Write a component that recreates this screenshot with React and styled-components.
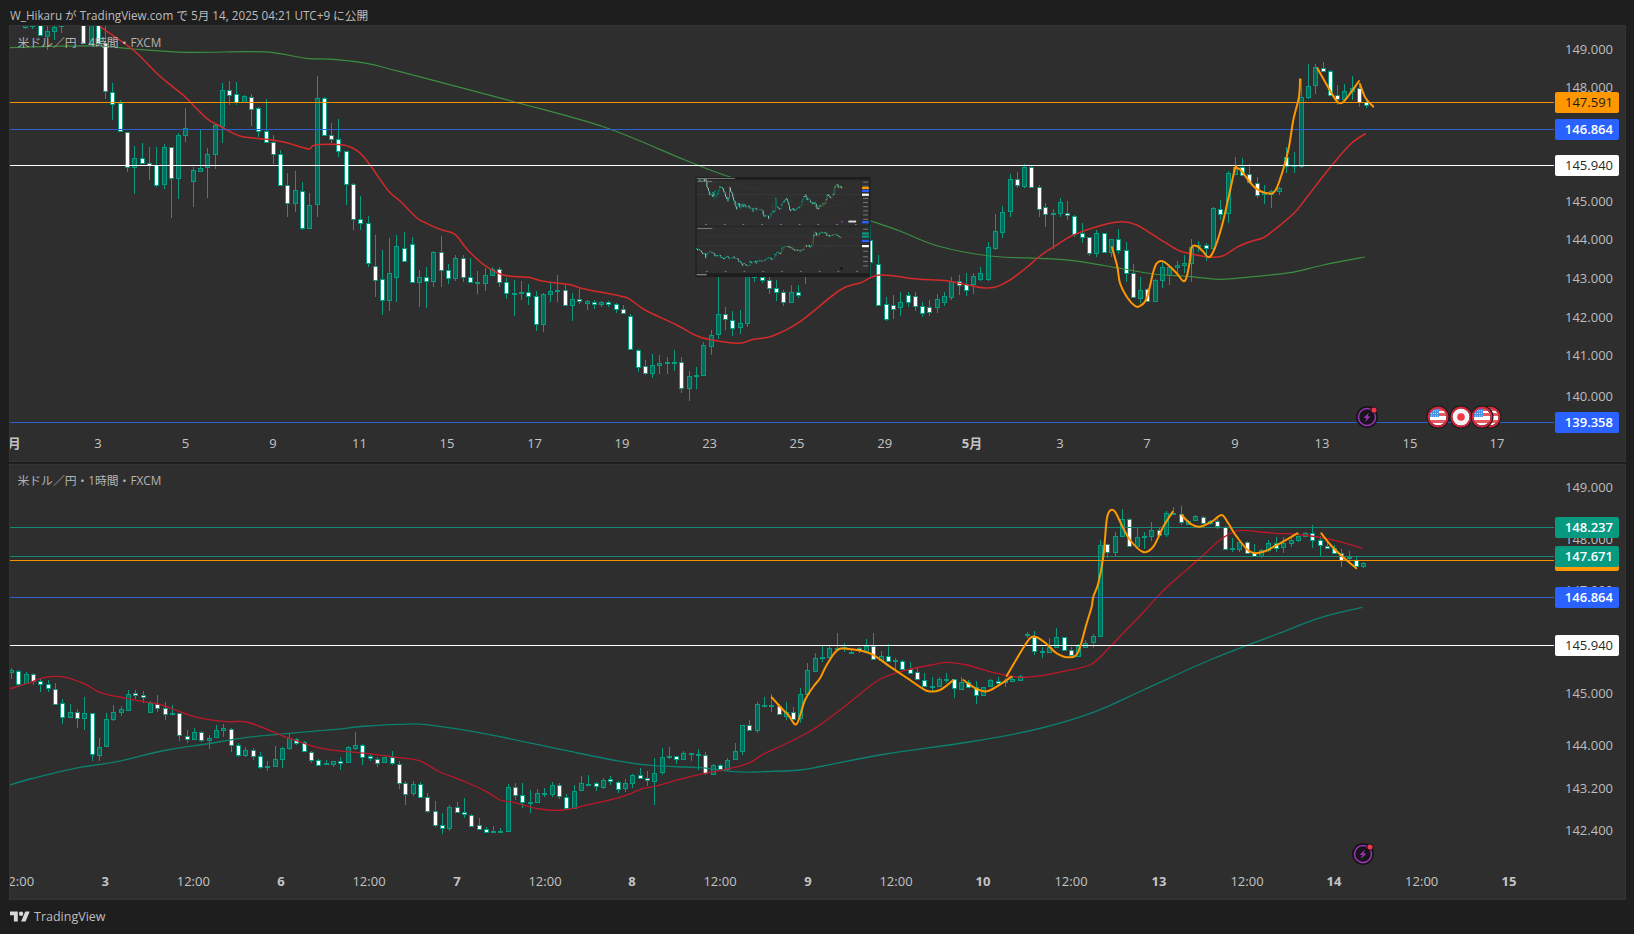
import React from 'react';
import styled, { createGlobalStyle } from 'styled-components';

const FONT = `"Open Sans", "Noto Sans CJK JP", sans-serif`;
const UP_EDGE = '#089981';
const UP_FILL = '#006b58';

const seg = (x0, dx, oy, s, items) =>
  items.map(([t, b, h, l, w], i) => ({ x: x0 + dx * i, t: oy + t / s, b: oy + b / s, h: oy + h / s, l: oy + l / s, w }));
const zp = (ox, oy, pts, s = 3) => pts.map(([x, y]) => [ox + x / s, oy + y / s]);

const smooth = (pts) => {
  let d = `M${pts[0][0].toFixed(1)} ${pts[0][1].toFixed(1)}`;
  for (let i = 0; i < pts.length - 1; i++) {
    const p0 = pts[Math.max(i - 1, 0)];
    const p1 = pts[i];
    const p2 = pts[i + 1];
    const p3 = pts[Math.min(i + 2, pts.length - 1)];
    const c1 = [p1[0] + (p2[0] - p0[0]) / 6, p1[1] + (p2[1] - p0[1]) / 6];
    const c2 = [p2[0] - (p3[0] - p1[0]) / 6, p2[1] - (p3[1] - p1[1]) / 6];
    d += `C${c1[0].toFixed(1)} ${c1[1].toFixed(1)} ${c2[0].toFixed(1)} ${c2[1].toFixed(1)} ${p2[0].toFixed(1)} ${p2[1].toFixed(1)}`;
  }
  return d;
};

/* ---------- upper pane candles: [bodyTop, bodyBottom, high, low, white?] ---------- */
const candlesTop = [
  ...seg(25, 7.29, 0, 3, [
    [70,82,60,86,0],[70,80,60,88,0],[70,107,60,107,1],[92,107,60,150,0],[80,92,60,120,0],[70,80,60,100,0],
    [50,60,40,70,0],[50,72,40,76,1],[60,130,60,130,1],[60,130,60,130,0],[60,130,60,130,1],
    [130,273,60,297,1],[275,310,250,360,1],[310,394,300,394,1],[395,501,395,515,1],[473,501,437,582,0],
    [473,487,430,490,1],[488,494,442,540,1],[494,553,440,560,1],[442,553,432,567,0],[442,535,440,653,1],
    [406,535,398,596,0],[385,406,324,425,0],[511,544,500,622,0],[503,511,390,510,0],[463,501,445,595,0],
    [376,463,370,506,0],[269,376,250,430,0],[269,283,244,315,1],[283,306,246,315,1],[289,307,286,310,0],
    [290,325,282,378,1],[325,394,320,412,1],[394,427,297,430,1],[427,463,404,492,1],[463,556,450,556,1],
    [556,610,520,650,1],[571,610,514,635,0],[572,682,546,690,1],[614,682,580,685,0],[295,613,228,650,0],
    [295,406,291,406,1],[406,418,370,428,1],[418,454,357,470,1],[454,553,452,616,1],[553,658,550,690,1],
    [658,670,588,690,1],[670,790,648,800,1],
  ]),
  ...seg(374.6, 7.29, 0, 0.9597, [
    [255,268,226,285,1],[268,288,240,302,1],[262,288,228,298,0],[236,266,226,290,0],
  ]),
  ...seg(404.33, 7.29, 170, 3, [
    [235,275,186,275,1],[223,338,202,338,1],[322,338,300,410,0],[322,334,292,413,1],[247,334,243,350,0],
    [247,302,198,350,1],[301,326,282,342,1],[265,326,255,332,0],[265,322,255,335,1],[322,338,265,340,1],
    [337,340,304,372,0],[316,340,294,362,0],[298,317,292,318,0],[298,338,292,350,1],[337,370,324,386,1],
    [370,371,331,437,0],[367,368,334,390,0],[367,379,342,405,1],[379,464,362,483,1],[373,464,370,486,0],
    [364,374,338,396,0],[360,361,315,395,0],[361,407,344,407,1],[388,407,370,452,0],[388,395,356,402,1],
    [393,398,390,420,0],[397,403,390,417,1],[397,404,392,411,0],[397,403,394,411,1],[403,418,398,428,1],
    [418,430,405,432,1],[439,539,432,540,1],[539,589,538,605,1],[589,611,570,614,1],[586,611,553,623,0],
    [580,586,556,612,0],[577,580,560,612,0],[577,578,541,603,0],[577,655,562,669,1],[619,655,604,692,0],
    [616,617,590,656,0],[526,616,516,616,0],[494,526,480,555,0],[433,494,200,506,0],[433,449,412,480,1],
    [449,472,423,497,1],[460,472,420,491,0],[100,460,60,470,0],[100,322,60,335,0],[322,331,100,340,1],
    [331,356,320,372,1],[355,368,330,392,1],[367,398,360,408,1],[367,398,344,400,0],[367,376,345,385,1],
  ]),
  ...seg(804.6, 7.29, 0, 1, [
    [255,270,240,284,0],[245,255,235,275,0],[235,245,225,250,0],[225,235,215,245,1],[215,228,205,235,0],
    [205,218,195,225,0],[198,208,190,215,1],[205,222,190,230,1],[225,240,210,250,1],[240,262,225,277,1],
  ]),
  ...seg(878.4, 7.29, 0, 0.9597, [
    [253,292,245,292,1],[292,306,285,308,1],[293,297,283,306,1],[290,295,280,303,0],[283,290,280,295,1],
    [284,294,280,298,1],[294,301,290,304,1],[295,300,288,303,1],[287,295,282,300,0],[284,290,280,294,0],
    [270,285,266,288,0],[270,274,264,283,1],[273,279,262,284,1],[265,273,262,282,0],[262,268,256,270,0],
    [237,268,232,270,0],[222,238,205,240,0],[203,222,198,228,0],[172,203,167,208,0],[172,178,165,180,1],
    [160,178,157,180,0],[160,179,158,180,1],[179,200,178,208,1],
  ]),
  ...seg(1045.33, 7.29, 160, 3, [
    [142,164,130,200,1],[160,163,148,268,0],[127,160,113,170,0],[160,167,123,180,1],[167,220,165,232,1],
    [220,233,190,250,1],[232,281,232,288,1],[220,281,210,291,0],[220,278,218,278,1],[238,278,238,290,0],
    [238,272,208,282,1],[271,340,246,366,1],[340,412,313,412,1],[389,412,352,430,0],[388,424,385,426,1],
    [361,424,358,425,0],[321,361,307,384,0],[320,345,318,375,0],[314,320,302,347,0],[308,314,286,340,0],
    [260,308,238,365,0],[256,260,243,275,0],[256,265,250,302,1],[145,265,140,275,0],[146,160,120,180,1],
    [40,160,34,188,0],[20,40,-10,46,0],[20,43,-5,45,1],[43,67,12,72,1],[68,103,52,113,1],[96,103,75,133,0],
    [92,102,90,143,0],[83,92,80,104,0],
  ]),
  ...seg(1286.33, 7.27, 0, 3, [
    [470,497,440,520,1],[494,497,457,518,0],[290,497,238,503,0],[257,290,192,296,0],[202,257,192,283,0],
    [203,211,186,211,1],[212,284,210,285,1],[284,295,255,315,1],[272,296,253,300,0],[263,272,228,300,0],
    [263,304,250,320,1],[305,314,300,323,1],
  ]),
];

/* ---------- lower pane candles ---------- */
const candlesBottom = [
  ...seg(11, 7.32, 640, 3, [
    [90,96,84,116,0],[92,131,90,140,1],[103,131,96,132,0],[103,124,100,135,1],[124,133,117,155,1],[133,146,120,155,1],
    [146,190,128,190,1],[190,232,177,251,1],[217,232,192,232,0],[217,235,207,264,1],[220,235,170,269,0],
    [220,343,220,362,1],[320,344,294,362,0],[238,319,219,319,0],[217,238,195,243,0],[208,217,197,228,0],
    [161,208,150,212,0],[160,166,150,178,1],[166,172,153,188,1],[190,217,184,218,0],[191,202,165,216,1],
    [203,220,186,240,1],[220,221,195,225,0],[220,286,219,303,1],[287,295,270,308,1],[275,295,264,296,0],
    [275,299,272,305,1],[293,298,285,327,0],[271,292,255,293,0],[265,271,252,290,0],[266,313,264,335,1],
    [314,343,310,351,1],[329,344,322,352,0],[329,346,325,360,1],[347,379,336,386,1],[379,380,364,393,0],
    [358,379,319,380,0],[325,358,320,384,0],[295,325,281,330,0],[296,307,295,315,1],[307,334,302,335,1],
    [335,358,334,369,1],[359,373,356,375,1],[370,371,361,375,0],[362,370,362,381,0],[362,368,350,390,1],
    [322,367,319,369,0],[314,322,277,330,0],[314,349,312,375,1],[349,356,342,362,1],[356,367,352,381,1],
    [352,367,350,368,0],[352,370,334,376,1],[371,427,364,446,1],
  ]),
  ...seg(405.33, 7.32, 620, 3, [
    [488,520,484,555,1],[493,521,484,527,0],[493,532,487,533,1],[532,574,519,578,1],[574,617,544,620,1],
    [616,625,580,641,1],[562,625,556,632,0],[562,577,546,578,1],[577,583,534,594,1],[584,616,582,617,1],
    [616,628,595,629,1],[628,637,622,640,1],[634,637,618,638,0],[633,634,625,636,0],[502,634,492,635,0],
    [502,526,490,540,1],[526,547,490,563,1],[547,548,511,578,0],[520,547,507,548,0],[520,523,504,530,0],
    [496,523,487,531,0],[496,529,490,536,1],[530,563,523,567,1],[512,563,495,564,0],[490,512,468,513,0],
    [491,492,465,498,0],[490,499,485,513,1],[479,499,473,506,0],[477,484,468,495,1],[485,505,483,518,1],
    [490,505,477,516,0],[466,490,462,504,0],[466,475,444,476,1],[475,481,453,497,1],[458,481,414,555,0],
    [412,457,384,464,0],[408,409,381,416,0],[409,418,407,431,1],[400,418,393,420,0],[400,401,400,422,0],
    [403,404,387,449,0],[406,460,395,466,1],[434,461,432,465,0],[434,445,432,452,1],[419,446,414,454,0],
    [394,418,369,420,0],[316,394,314,404,0],[316,331,300,332,1],[253,331,246,338,0],[254,255,231,262,0],
    [256,257,222,276,0],[258,281,253,285,1],[275,287,246,300,0],[275,296,260,298,1],
  ]),
  ...seg(800, 7.32, 490, 3, [
    [613,685,595,700,0],[541,613,518,615,0],[503,541,490,543,0],[501,502,468,515,0],[475,503,468,505,0],
    [473,474,430,480,0],[472,476,460,486,0],[485,488,480,491,1],[473,480,472,490,1],[468,486,448,490,0],
    [467,505,430,506,1],[497,510,484,515,0],[497,511,463,515,1],[510,511,504,540,0],[512,536,510,540,1],
    [536,547,516,550,1],[547,569,530,570,1],[569,586,549,588,1],[587,588,560,605,0],[566,586,560,590,0],
    [566,567,550,578,0],[568,595,566,623,1],[575,596,560,598,0],[575,590,570,592,1],[590,613,572,641,1],
    [590,613,590,616,0],[571,590,568,592,0],[572,577,560,580,1],[574,576,564,590,0],[567,574,558,575,0],
    [557,568,556,569,0],[433,434,427,445,0],[442,484,424,494,1],[484,485,470,503,0],[470,484,444,485,0],
    [442,473,414,474,0],[442,481,440,482,1],[481,496,470,498,1],[468,499,462,500,0],[458,470,450,472,0],
    [439,458,432,475,0],[165,439,150,440,0],[163,187,163,205,1],[139,187,127,198,0],[88,139,57,140,0],
    [88,169,84,170,1],[142,169,113,178,0],[138,141,125,178,0],[119,137,97,152,0],[119,133,115,135,1],
    [70,133,64,140,0],[69,70,52,72,0],[73,97,48,104,1],[92,100,90,103,0],[79,90,76,92,0],[80,97,78,99,1],
    [92,97,90,105,0],[92,108,85,118,1],[110,177,108,178,1],[175,177,145,185,0],[155,176,155,187,0],
    [155,187,153,190,1],[188,196,162,198,1],[180,197,176,203,0],[158,180,150,185,0],[158,172,140,185,1],
  ]),
  ...seg(1283.33, 7.27, 480, 3, [
    [190,203,170,218,0],[181,190,168,200,0],[169,181,158,185,0],[160,170,155,172,0],[160,181,135,203,1],
    [181,197,168,228,1],[197,203,185,205,1],[203,217,195,220,1],[218,239,208,260,1],[231,232,213,240,0],
    [239,256,230,262,1],[250,258,246,263,0],
  ]),
];

/* ---------- indicator lines (page coordinates) ---------- */
const topRed = smooth([
  ...zp(0, 0, [[300,80],[400,150],[470,220],[520,262],[555,290],[620,355],[660,378],[720,408],[800,418],[860,428],[925,447],[945,435],[1030,435],[1075,455],[1110,495],[1165,572]]),
  ...zp(400, 170, [[0,93],[50,143],[80,160],[120,178],[165,193],[200,236],[250,283],[310,315],[385,322],[430,334],[510,344],[550,356],[660,378],[690,388],[735,420],[830,465],[885,495],[925,508],[1015,520],[1060,508],[1120,497],[1200,455]]),
  [840,290],[860,283],[880,275],[917,279],[948,281],[985,288],[1005,283],[1026,268],
  ...zp(1040, 160, [[0,288],[50,255],[100,225],[180,197],[245,185],[290,195],[340,225],[380,250],[420,273],[470,285],[510,292],[550,287],[590,262],[630,245],[670,233]]),
  ...zp(1234, 0, [[120,690],[180,640],[220,590],[290,500],[350,432],[396,400]]),
]);
const topGreen = smooth([
  ...zp(0, 0, [[30,143],[150,139],[300,138],[400,147],[560,157],[740,155],[820,158],[920,175],[1000,178],[1100,190],[1200,215]]),
  [511,101],[604,127],[685,160],[730,177],[800,198],[871,221],[900,231],[938,246],[990,256],
  ...zp(1040, 160, [[0,295],[100,302],[200,318],[340,342],[430,348],[470,352],[540,358],[640,350],[750,338],[850,315],[975,291]]),
]);
const topOrange = [
  smooth([
    ...zp(1040, 160, [[216,262],[232,320],[240,370],[260,410],[285,438],[300,438],[320,415],[340,335],[350,310],[365,303],[385,315],[410,340],[430,363],[440,350],[450,300],[455,262],[470,258],[490,275],[505,292],[520,275],[545,200],[565,115],[585,25]]),
    ...zp(1234, 0, [[8,505],[20,510],[60,560],[100,580],[125,570],[150,500],[165,440],[178,360],[195,290],[198,238]]),
  ]),
  smooth(zp(1234, 0, [[250,205],[290,275],[310,305],[325,308],[345,285],[375,243]])),
  smooth(zp(1234, 0, [[378,252],[395,295],[418,320]])),
];

const botRed = smooth([
  ...zp(0, 640, [[30,146],[90,128],[130,113],[185,110],[250,130],[295,155],[320,163],[380,175],[430,185],[480,193],[540,215],[590,232],[680,245],[740,246],[830,280],[860,292],[940,319],[1010,332],[1100,340]]),
  ...zp(400, 620, [[0,413],[40,418],[70,427],[120,456],[190,483],[260,515],[300,540],[340,547],[420,567],[490,570],[570,553],[660,532],[730,505],[760,500],[870,470],[940,455],[1000,443],[1050,428],[1090,402],[1150,375]]),
  ...zp(800, 490, [[40,718],[120,660],[170,620],[240,568],[320,540],[400,524],[440,517],[500,525],[590,550],[660,562],[730,556],[800,542],[875,522],[930,470],[1030,367],[1100,292],[1200,205],[1260,150],[1315,122],[1380,126],[1440,131]]),
  ...zp(1234, 480, [[180,162],[290,178],[385,205]]),
]);
const botTeal = smooth([
  ...zp(0, 640, [[30,435],[90,417],[160,400],[240,382],[350,365],[500,330],[620,312],[720,295],[800,286],[900,277],[1000,269],[1100,258],[1200,253]]),
  ...zp(400, 620, [[70,313],[180,328],[300,350],[500,392],[650,422],[760,437],[900,443],[1000,455],[1060,456],[1200,450]]),
  [823,766],[886,754],[969,742],
  ...zp(800, 490, [[700,720],[880,667],[1030,600],[1230,510]]),
  ...zp(1234, 480, [[130,462],[260,413],[385,382]]),
]);
const botOrange = [
  smooth([
    ...zp(400, 620, [[1115,232],[1140,260],[1165,285],[1190,312]]),
    ...zp(800, 490, [[15,630],[40,590],[60,565],[80,525],[110,482],[140,476],[210,490],[270,530],[330,570],[380,602],[420,600],[460,570]]),
  ]),
  smooth(zp(800, 490, [[490,570],[530,597],[560,604],[590,590],[635,560]])),
  smooth(zp(800, 490, [[620,558],[660,490],[690,445],[710,442],[740,462],[770,490],[810,502],[835,485],[860,400],[875,350],[880,320],[895,280],[910,200],[920,90],[930,62],[945,65],[965,105],[990,150],[1030,186],[1060,170],[1090,110],[1118,65]])),
  smooth([
    ...zp(800, 490, [[1145,75],[1170,100],[1200,110],[1235,95],[1265,75],[1285,100],[1310,140],[1350,185],[1390,185],[1440,160]]),
    ...zp(1234, 480, [[190,160]]),
  ]),
  smooth(zp(1234, 480, [[262,160],[290,195],[320,225],[367,265]])),
];

const TOP_LINES = [
  { y: 102.5, c: '#f59300' },
  { y: 129.5, c: '#2d5fd0' },
  { y: 165.5, c: '#ffffff' },
  { y: 422.5, c: '#2d5fd0' },
];
const BOTTOM_LINES = [
  { y: 527.5, c: '#168a75' },
  { y: 556.5, c: '#168a75' },
  { y: 560.5, c: '#f59300' },
  { y: 597.5, c: '#2d5fd0' },
  { y: 645.5, c: '#ffffff' },
];

const Candles = ({ data, mini }) => (
  <g shapeRendering={mini ? undefined : 'crispEdges'}>
    {data.map((c, i) => {
      const cx = Math.round(c.x) + 0.5;
      const top = Math.round(c.t);
      const h = Math.round(c.b - c.t);
      return (
        <g key={i}>
          <line x1={cx} x2={cx} y1={c.h} y2={c.l} stroke={UP_EDGE} strokeWidth={mini ? 2 : 1} />
          {h < 2 ? (
            <rect x={cx - 2.5} y={top} width={5} height={2} fill={UP_EDGE} />
          ) : (
            <rect x={cx - 2} y={top + 0.5} width={mini ? 6 : 4} height={h} fill={c.w ? '#ffffff' : UP_FILL} stroke={UP_EDGE} strokeWidth={1} />
          )}
        </g>
      );
    })}
  </g>
);

const ChartMarks = ({ candles, lines, curves, orange, mini }) => (
  <>
    <Candles data={candles} mini={mini} />
    {curves.map((c, i) => (
      <path key={i} d={c.d} fill="none" stroke={c.color} strokeWidth={mini ? 4 : c.w} strokeOpacity={mini ? 0.45 : 1} strokeDasharray={mini ? '14 18' : undefined} strokeLinejoin="round" />
    ))}
    {lines.map((l) => (
      <line key={l.y} x1="10" x2="1554" y1={l.y} y2={l.y} stroke={l.c} strokeWidth={mini ? 2 : 1} shapeRendering={mini ? undefined : 'crispEdges'} strokeOpacity={mini ? 0.25 : 1} />
    ))}
    {orange.map((d, i) => (
      <path key={i} d={d} fill="none" stroke="#ff9800" strokeWidth={mini ? 3 : 2} strokeOpacity={mini ? 0.6 : 1} strokeLinecap="round" strokeLinejoin="round" />
    ))}
  </>
);

const TOP_CURVES = [
  { d: topGreen, color: '#3c8e40', w: 1.2 },
  { d: topRed, color: '#d32a2a', w: 1.5 },
];
const BOTTOM_CURVES = [
  { d: botTeal, color: '#0b8070', w: 1.3 },
  { d: botRed, color: '#bb182b', w: 1.3 },
];

/* ---------- styled parts ---------- */
const Global = createGlobalStyle`
  html, body { margin: 0; padding: 0; background: #1e1e1e; }
`;
const Page = styled.div`
  width: 1634px;
  height: 934px;
  background: #1e1e1e;
  display: flex;
  flex-direction: column;
  font-family: ${FONT};
  overflow: hidden;
`;
const Header = styled.header`
  height: 26px;
  padding: 3px 0 0 10px;
  box-sizing: border-box;
  display: flex;
  align-items: center;
  color: #bdbdbd;
  font-size: 11.7px;
  white-space: nowrap;
`;
const Panes = styled.main`
  display: flex;
  flex-direction: column;
  gap: 4px;
  margin: 0 9px 0 10px;
`;
const Pane = styled.section`
  position: relative;
  height: ${(p) => p.$h}px;
  background: #2e2e2e;
  box-shadow: 0 0 0 1px #343434;
  overflow: hidden;
`;
const Canvas = styled.svg`
  position: absolute;
  inset: 0;
  width: 100%;
  height: 100%;
  display: block;
`;
const Legend = styled.div`
  position: absolute;
  left: 7.5px;
  top: ${(p) => p.$top}px;
  color: #b4b4b4;
  font-size: 11.8px;
  line-height: 16px;
  white-space: nowrap;
`;
const Tick = styled.span`
  position: absolute;
  right: 12px;
  top: ${(p) => p.$y}px;
  transform: translateY(-50%);
  color: #bdbdbd;
  font-size: 13px;
  line-height: 16px;
`;
const Tag = styled.span`
  position: absolute;
  right: 6px;
  top: ${(p) => p.$y}px;
  width: 64px;
  height: 21px;
  box-sizing: border-box;
  padding-right: 6px;
  border-radius: 2px;
  background: ${(p) => p.$bg};
  color: ${(p) => p.$fg};
  font-size: 13px;
  font-weight: ${(p) => (p.$strong ? 600 : 400)};
  line-height: 21px;
  text-align: right;
`;
const TimeLabel = styled.span`
  position: absolute;
  left: ${(p) => p.$x}px;
  top: ${(p) => p.$y}px;
  transform: translate(-50%, -50%);
  color: #c4c4c4;
  font-size: 13px;
  font-weight: ${(p) => (p.$bold ? 700 : 400)};
  line-height: 16px;
  white-space: nowrap;
`;
const Pin = styled.svg`
  position: absolute;
  left: ${(p) => p.$x - 12}px;
  top: ${(p) => p.$y - 12}px;
  width: 24px;
  height: 24px;
`;
const Thumbnail = styled.svg`
  position: absolute;
  left: 685px;
  top: 151px;
  width: 176px;
  height: 100px;
  display: block;
`;
const Footer = styled.footer`
  flex: 1;
  display: flex;
  align-items: center;
  gap: 4px;
  padding: 0 0 0 10px;
  color: #bdbdbd;
  font-size: 12.5px;
`;
const Logo = styled.svg`
  width: 20px;
  height: 16px;
  display: block;
  fill: #d8d8d8;
`;

/* ---------- pins ---------- */
const BoltPin = ({ x, y }) => (
  <Pin $x={x} $y={y} viewBox="0 0 24 24">
    <circle cx="12" cy="12" r="11" fill="#17141c" />
    <circle cx="12" cy="12" r="8.5" fill="none" stroke="#9c36b5" strokeWidth="1.5" />
    <path d="M14 7.5 8.5 13h3l-1.5 4 5.5-5.5h-3z" fill="#9c36b5" />
    <circle cx="19" cy="5" r="3.6" fill="#17141c" />
    <circle cx="19" cy="5" r="2.6" fill="#f23645" />
  </Pin>
);
const FlagUS = ({ x, y, id }) => (
  <Pin $x={x} $y={y} viewBox="0 0 24 24">
    <clipPath id={id}><circle cx="12" cy="12" r="8.5" /></clipPath>
    <circle cx="12" cy="12" r="11.5" fill="#1a1a1e" />
    <g clipPath={`url(#${id})`}>
      <rect x="3" y="3" width="18" height="18" fill="#ffffff" />
      <rect x="12" y="3" width="9" height="3" fill="#e85a5f" />
      <rect x="12" y="8" width="9" height="3" fill="#e85a5f" />
      <rect x="3" y="15" width="18" height="3" fill="#e85a5f" />
      <rect x="3" y="3" width="10" height="9" fill="#4a90e2" />
      <path d="M5 6h7M5 8.5h7M5 11h7" stroke="#d5e6fb" strokeWidth="0.9" strokeDasharray="1 1" />
    </g>
    <circle cx="12" cy="12" r="9.5" fill="none" stroke="#d3283c" strokeWidth="1.9" />
  </Pin>
);
const FlagJP = ({ x, y }) => (
  <Pin $x={x} $y={y} viewBox="0 0 24 24">
    <circle cx="12" cy="12" r="11.5" fill="#1a1a1e" />
    <circle cx="12" cy="12" r="8.7" fill="#f4f4f6" />
    <circle cx="12" cy="12" r="3.8" fill="#f23645" />
    <circle cx="12" cy="12" r="9.5" fill="none" stroke="#d3283c" strokeWidth="1.9" />
  </Pin>
);

/* ---------- thumbnail: the same two charts, drawn very small ---------- */
const Smudge = ({ x, y, w = 46, h = 9, c = '#7c7c7c' }) => <rect x={x} y={y} width={w} height={h} fill={c} />;
const MiniPage = () => (
  <Thumbnail viewBox="0 0 1634 934">
    <rect width="1634" height="934" fill="#1d1d1d" />
    <rect x="10" y="26" width="1615" height="435" fill="#2e2e2e" />
    <rect x="10" y="465" width="1615" height="434" fill="#2e2e2e" />
    <ChartMarks candles={candlesTop} lines={TOP_LINES} curves={TOP_CURVES} orange={topOrange} mini />
    <ChartMarks candles={candlesBottom} lines={BOTTOM_LINES} curves={BOTTOM_CURVES} orange={botOrange} mini />
    <Smudge x={10} y={9} w={360} />
    <Smudge x={17} y={36} w={140} />
    <Smudge x={17} y={476} w={140} />
    <Smudge x={10} y={905} w={95} h={14} />
    {[49, 87, 201, 239, 278, 317, 355, 396, 488, 694, 746, 789, 831].map((y) => <Smudge key={y} x={1565} y={y - 5} />)}
    {[98, 273, 447, 622, 797, 972, 1147, 1322, 1497].map((x) => <Smudge key={x} x={x - 8} y={439} w={16} />)}
    {[105, 281, 457, 632, 808, 983, 1159, 1334, 1509].map((x) => <Smudge key={x} x={x - 8} y={877} w={16} />)}
    <rect x="1555" y="92" width="64" height="21" fill="#ff9800" />
    <rect x="1555" y="119" width="64" height="21" fill="#2962ff" />
    <rect x="1555" y="155" width="64" height="21" fill="#ffffff" />
    <rect x="1555" y="412" width="64" height="21" fill="#2962ff" />
    <rect x="1555" y="517" width="64" height="21" fill="#089981" />
    <rect x="1555" y="546" width="64" height="21" fill="#089981" />
    <rect x="1555" y="587" width="64" height="21" fill="#2962ff" />
    <rect x="1555" y="635" width="64" height="21" fill="#ffffff" />
    <rect x="1428" y="407" width="72" height="18" fill="#dedede" />
    <circle cx="1367" cy="417" r="11" fill="#7a2d8f" />
    <circle cx="1363" cy="854" r="11" fill="#0c0c0c" />
  </Thumbnail>
);

/* ---------- data for the axes ---------- */
const TOP_TICKS = [['149.000', 49], ['148.000', 87], ['145.000', 201], ['144.000', 239], ['143.000', 278], ['142.000', 317], ['141.000', 355], ['140.000', 396]];
const BOTTOM_TICKS = [['149.000', 487], ['148.000', 539], ['147.000', 590], ['145.000', 693], ['144.000', 745], ['143.200', 788], ['142.400', 830]];
const TOP_TIMES = [['4月', 10.6, 1], ['3', 98], ['5', 185.5], ['9', 273], ['11', 359.5], ['15', 447], ['17', 534.6], ['19', 622], ['23', 709.6], ['25', 797], ['29', 884.7], ['5月', 972, 1], ['3', 1060], ['7', 1147], ['9', 1235], ['13', 1322], ['15', 1410], ['17', 1497]];
const BOTTOM_TIMES = [['12:00', 17.5], ['3', 105.3, 1], ['12:00', 193.3], ['6', 281, 1], ['12:00', 369], ['7', 457, 1], ['12:00', 545], ['8', 632, 1], ['12:00', 720], ['9', 808, 1], ['12:00', 896], ['10', 983, 1], ['12:00', 1071], ['13', 1159, 1], ['12:00', 1247], ['14', 1334, 1], ['12:00', 1421.7], ['15', 1509, 1]];
const TOP_TAGS = [
  ['147.591', 92, '#ff9800', '#1c1c1c'],
  ['146.864', 119, '#2962ff', '#ffffff', 1],
  ['145.940', 155, '#ffffff', '#2a2a2a'],
  ['139.358', 412, '#2962ff', '#ffffff', 1],
];
const BOTTOM_TAGS = [
  ['148.237', 517, '#089981', '#ffffff', 1],
  ['', 550, '#ff9800', '#1c1c1c'],
  ['147.671', 546, '#089981', '#ffffff', 1],
  ['146.864', 587, '#2962ff', '#ffffff', 1],
  ['145.940', 635, '#ffffff', '#2a2a2a'],
];

const ChartPane = ({ top, height, legend, ticks, tags, times, axisY, children, marks }) => (
  <Pane $h={height}>
    <Canvas viewBox={`10 ${top} 1615 ${height}`}>
      <ChartMarks {...marks} />
    </Canvas>
    <Legend $top={legend.y - top}>{legend.text}</Legend>
    {ticks.map(([t, y]) => <Tick key={t} $y={y - top}>{t}</Tick>)}
    {tags.map(([t, y, bg, fg, strong]) => <Tag key={y} $y={y - top} $bg={bg} $fg={fg} $strong={strong}>{t}</Tag>)}
    {times.map(([t, x, bold]) => <TimeLabel key={x} $x={x - 10} $y={axisY - top} $bold={bold}>{t}</TimeLabel>)}
    {children}
  </Pane>
);

export default function App() {
  return (
    <Page>
      <Global />
      <Header>W_Hikaru が TradingView.com で 5月 14, 2025 04:21 UTC+9 に公開</Header>
      <Panes>
        <ChartPane
          top={26}
          height={435}
          axisY={443}
          legend={{ y: 34, text: '米ドル／円・4時間・FXCM' }}
          ticks={TOP_TICKS}
          tags={TOP_TAGS}
          times={TOP_TIMES}
          marks={{ candles: candlesTop, lines: TOP_LINES, curves: TOP_CURVES, orange: topOrange }}
        >
          <BoltPin x={1356.7} y={390.7} />
          <FlagUS x={1480} y={390.5} id="us-b" />
          <FlagUS x={1428} y={390.5} id="us-a" />
          <FlagJP x={1451} y={390.5} />
          <FlagUS x={1472} y={390.5} id="us-c" />
          <MiniPage />
        </ChartPane>
        <ChartPane
          top={465}
          height={434}
          axisY={881}
          legend={{ y: 472, text: '米ドル／円・1時間・FXCM' }}
          ticks={BOTTOM_TICKS}
          tags={BOTTOM_TAGS}
          times={BOTTOM_TIMES}
          marks={{ candles: candlesBottom, lines: BOTTOM_LINES, curves: BOTTOM_CURVES, orange: botOrange }}
        >
          <BoltPin x={1353.3} y={389.3} />
        </ChartPane>
      </Panes>
      <Footer>
        <Logo viewBox="0 0 36 28">
          <path d="M14 22H7V11H0V4h14v18zM28 22h-8l7.5-18h8L28 22z" />
          <circle cx="20" cy="8" r="4" />
        </Logo>
        TradingView
      </Footer>
    </Page>
  );
}
